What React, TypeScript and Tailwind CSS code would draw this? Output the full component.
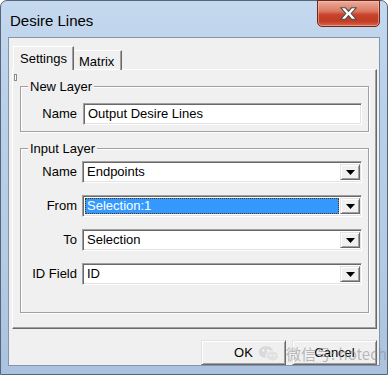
import React from "react";

const sunken =
  "border border-t-[#a0a0a0] border-l-[#a0a0a0] border-r-white border-b-white shadow-[inset_1px_1px_0_#696969,inset_-1px_-1px_0_#e3e3e3]";
const raised =
  "border border-t-[#e3e3e3] border-l-[#e3e3e3] border-r-[#696969] border-b-[#696969] shadow-[inset_1px_1px_0_#ffffff,inset_-1px_-1px_0_#a0a0a0]";

function DropButton() {
  return (
    <div className={`w-[20px] flex items-center justify-center bg-[#f0f0f0] ${raised}`}>
      <svg width="9" height="5" viewBox="0 0 9 5">
        <path d="M0 0H9L4.5 5Z" fill="#000" />
      </svg>
    </div>
  );
}

function Combo({ value, selected }: { value: string; selected?: boolean }) {
  return (
    <div className={`flex h-[22px] bg-white p-[2px] pr-[1px] ${sunken}`}>
      {selected ? (
        <div className="flex-1 mr-[1px] flex items-center pl-px bg-[#3399ff] text-white border border-dotted border-[#5a3000]">
          {value}
        </div>
      ) : (
        <div className="flex-1 flex items-center pl-[2px] text-black">{value}</div>
      )}
      <DropButton />
    </div>
  );
}

function Group({ title, children }: { title: string; children: React.ReactNode }) {
  return (
    <fieldset className="border border-[#a0a0a0] shadow-[inset_1px_1px_0_#ffffff,1px_1px_0_#ffffff] mx-[7px]">
      <legend className="ml-[7px] px-[2px] leading-[15px] relative bg-[#f0f0f0]">{title}</legend>
      {children}
    </fieldset>
  );
}

const rows = [
  { label: "Name", value: "Endpoints" },
  { label: "From", value: "Selection:1", selected: true },
  { label: "To", value: "Selection" },
  { label: "ID Field", value: "ID" },
];

export default function App() {
  return (
    <div className="w-[388px] h-[375px] overflow-hidden font-['Liberation_Sans',Arial,sans-serif] text-[13px] text-black">
      <div className="relative w-[388px] h-[375px] flex flex-col rounded-t-[7px] border border-[#56657a] bg-[linear-gradient(180deg,#c4d8ee_0%,#b9d0e9_30%,#b4cbe5_70%,#aac2df_100%)]">
        {/* title bar */}
        <div className="h-[36px] flex items-start">
          <span className="pl-[9px] pt-[11px] text-[15px] leading-[18px]">Desire Lines</span>
          <div className="ml-auto mr-[7px] -mt-px w-[63px] h-[27px] rounded-b-[5px] border border-[#6e2619] shadow-[inset_0_0_0_1px_rgba(255,200,190,0.5)] bg-[linear-gradient(180deg,#e9ad9f_0%,#dc7a62_40%,#c8432b_55%,#c23b24_80%,#d5674c_100%)] flex items-center justify-center">
            <svg width="19" height="15" viewBox="0 0 18 14">
              <path
                d="M1.5 1.5H6L9 5L12 1.5H16.5L11.5 7L16.5 12.5H12L9 9L6 12.5H1.5L6.5 7Z"
                fill="#fff"
                stroke="#4b4b4b"
                strokeWidth="1"
                strokeLinejoin="round"
              />
            </svg>
          </div>
        </div>

        {/* client area */}
        <div className="ml-[7px] w-[372px] h-[329px] border border-[#8394ab] bg-[#f0f0f0] flex flex-col">
          {/* tabs */}
          <div className="ml-[3px] mt-[8px] flex items-end -mb-px relative z-10">
            <div className="ml-px h-[24px] px-[6px] flex items-start pt-[2px] bg-[#f0f0f0] border-t border-l border-white border-r border-r-[#696969] shadow-[inset_-1px_0_0_#a0a0a0]">
              Settings
            </div>
            <div className="h-[20px] pl-[5px] pr-[7px] flex items-start pt-[1px] border-t border-r border-t-white border-r-[#696969] shadow-[inset_-1px_0_0_#a0a0a0]">
              Matrix
            </div>
          </div>

          {/* tab page */}
          <div className="relative ml-[3px] w-[365px] h-[260px] border border-t-white border-l-white border-r-[#696969] border-b-[#696969] shadow-[inset_-1px_-1px_0_#a0a0a0] pt-[9px]">
            <span className="absolute left-[1px] top-[4px] w-[3px] h-[7px] border border-[#8a8a8a] bg-white" />
            <Group title="New Layer">
              <div className="flex items-center pt-[9px] pb-[6px]">
                <span className="w-[56px] text-right">Name</span>
                <div className={`ml-[6px] mr-[6px] flex-1 h-[22px] bg-white flex items-center pl-[4px] ${sunken}`}>
                  Output Desire Lines
                </div>
              </div>
            </Group>
            <div className="h-[9px]" />
            <Group title="Input Layer">
              <div className="grid grid-cols-[56px_1fr] gap-x-[5px] gap-y-[12px] pt-[5px] pb-[27px] pr-[6px]">
                {rows.map((r) => (
                  <React.Fragment key={r.label}>
                    <span className="self-center text-right">{r.label}</span>
                    <Combo value={r.value} selected={r.selected} />
                  </React.Fragment>
                ))}
              </div>
            </Group>
          </div>

          {/* buttons */}
          <div className="mt-[11px] mr-[2px] flex justify-end gap-[6px]">
            <button className={`w-[85px] h-[25px] bg-[#f0f0f0] ${raised} border-[#444] border-t-[#e3e3e3] border-l-[#e3e3e3]`}>OK</button>
            <button className={`w-[85px] h-[25px] bg-[#f0f0f0] ${raised}`}>Cancel</button>
          </div>
        </div>

        {/* watermark overlay */}
        <div className="absolute left-[257px] top-[344px] flex items-center gap-[6px] pointer-events-none text-[#8f8f8f]/60 font-['Noto_Sans_CJK_SC',sans-serif] text-[15px] leading-[18px]">
          <svg width="22" height="18" viewBox="0 0 22 18">
            <ellipse cx="8" cy="7" rx="7.5" ry="6" fill="#d4d4d4" fillOpacity="0.8" />
            <ellipse cx="14.5" cy="11" rx="6.5" ry="5.2" fill="#e2e2e2" stroke="#f5f5f5" strokeWidth="1" />
            <circle cx="5.5" cy="5.5" r="1" fill="#fff" />
            <circle cx="10" cy="5.5" r="1" fill="#fff" />
            <circle cx="12.5" cy="10.5" r="0.8" fill="#fff" />
            <circle cx="16.5" cy="10.5" r="0.8" fill="#fff" />
          </svg>
          <span>微信号: hotech</span>
        </div>
      </div>
    </div>
  );
}
